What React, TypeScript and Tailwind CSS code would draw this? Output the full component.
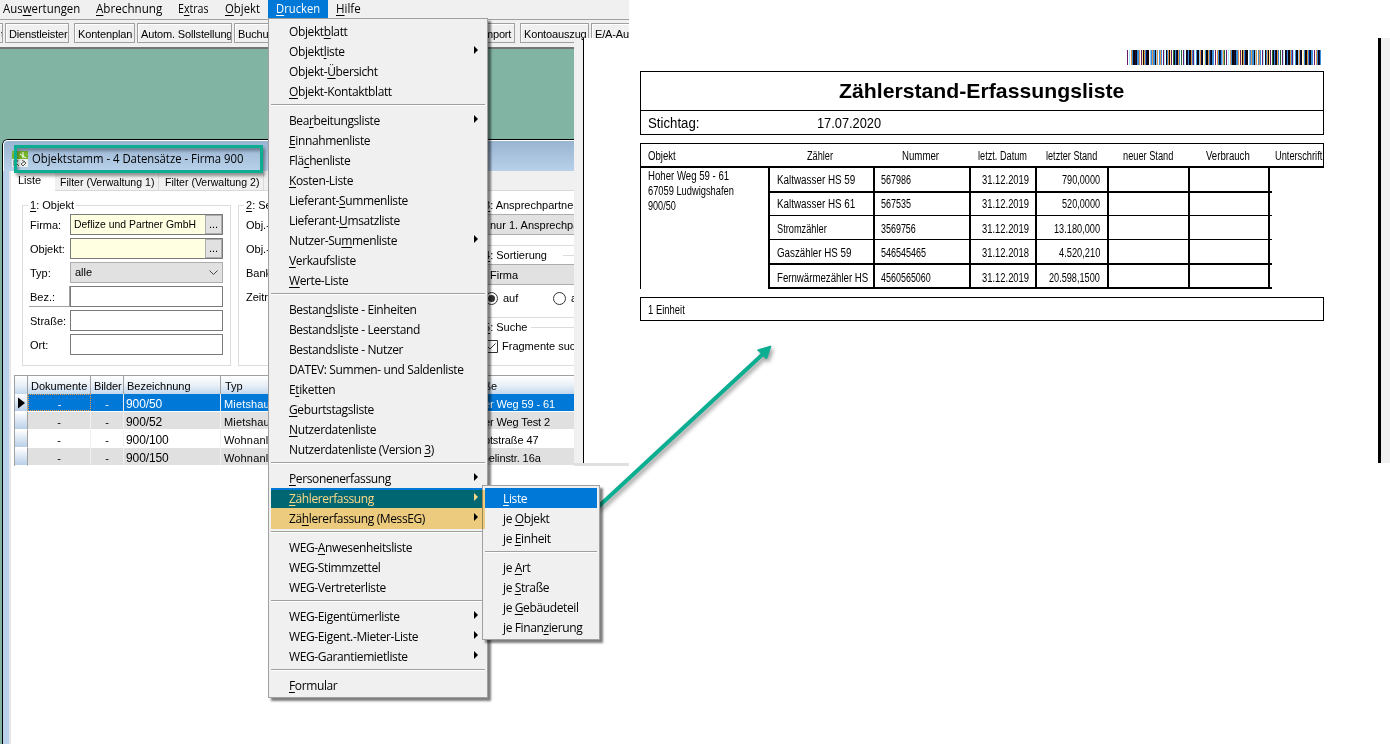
import React, { useLayoutEffect, useRef, useState } from 'react';
import clsx from 'clsx';

const SEGOE = "font-['Open_Sans',sans-serif]";
const MSSANS = "font-['Liberation_Sans',sans-serif]";

type MenuEntry = { label: string; sub?: boolean; active?: boolean };

// "&" marks the mnemonic letter
const menuGroups: MenuEntry[][] = [
  [
    { label: 'Objekt&blatt' },
    { label: 'Objekt&liste', sub: true },
    { label: 'Objekt-&Übersicht' },
    { label: '&Objekt-Kontaktblatt' },
  ],
  [
    { label: 'Bea&rbeitungsliste', sub: true },
    { label: '&Einnahmenliste' },
    { label: 'Flä&chenliste' },
    { label: '&Kosten-Liste' },
    { label: 'Lieferant-&Summenliste' },
    { label: 'Lieferant-&Umsatzliste' },
    { label: 'Nutzer-Su&mmenliste', sub: true },
    { label: '&Verkaufsliste' },
    { label: '&Werte-Liste' },
  ],
  [
    { label: 'Bestan&dsliste - Einheiten' },
    { label: 'Bestandsl&iste - Leerstand' },
    { label: 'Bestandsliste - Nutzer' },
    { label: 'DATEV: Summen- und Saldenliste' },
    { label: 'E&tiketten' },
    { label: '&Geburtstagsliste' },
    { label: '&Nutzerdatenliste' },
    { label: 'Nutzerdatenliste (Version &3)' },
  ],
  [
    { label: '&Personenerfassung', sub: true },
    { label: '&Zählererfassung', sub: true, active: true },
    { label: 'Zä&hlererfassung (MessEG)', sub: true },
  ],
  [{ label: 'WEG-&Anwesenheitsliste' }, { label: 'WEG-Stimmzettel' }, { label: 'WEG-Vertreterliste' }],
  [
    { label: 'WEG-Eigentümerliste', sub: true },
    { label: 'WEG-Eigent.-Mieter-Liste', sub: true },
    { label: 'WEG-Garantiemietliste', sub: true },
  ],
  [{ label: '&Formular' }],
];

const subGroups: MenuEntry[][] = [
  [{ label: '&Liste', active: true }, { label: 'je &Objekt' }, { label: 'je &Einheit' }],
  [{ label: 'je &Art' }, { label: 'je &Straße' }, { label: 'je &Gebäudeteil' }, { label: 'je Finan&zierung' }],
];

const gridRows = [
  { name: '900/50', type: 'Mietshaus', street: 'Hoher Weg 59 - 61' },
  { name: '900/52', type: 'Mietshaus', street: 'Hoher Weg Test 2' },
  { name: '900/100', type: 'Wohnanlage', street: 'Hauptstraße 47' },
  { name: '900/150', type: 'Wohnanlage', street: 'Zeppelinstr. 16a' },
];

const meters = [
  { name: 'Kaltwasser HS 59', nw: 78, no: '567986', ow: 30, date: '31.12.2019', value: '790,0000', vw: 38, row: 'h-[25px] border-b-2 leading-[25px]' },
  { name: 'Kaltwasser HS 61', nw: 78, no: '567535', ow: 30, date: '31.12.2019', value: '520,0000', vw: 38, row: 'h-[23px] border-b leading-[23px]' },
  { name: 'Stromzähler', nw: 50, no: '3569756', ow: 35, date: '31.12.2019', value: '13.180,000', vw: 46, row: 'h-[24px] border-b leading-[27px]' },
  { name: 'Gaszähler HS 59', nw: 74, no: '546545465', ow: 45, date: '31.12.2018', value: '4.520,210', vw: 41, row: 'h-[25px] border-b-2 leading-[27px]' },
  { name: 'Fernwärmezähler HS', nw: 91, no: '4560565060', ow: 50, date: '31.12.2019', value: '20.598,1500', vw: 51, row: 'h-[24px] border-b-2 leading-[27px]' },
];

const BARS = 'p.c.obkknkbbo.pykobnkk.sbobbkso.bob.pc.kbokyp.gkbnkob.g.pc.knbkkobpc.bkksonk.ybkkobnkbb.p.obknbsog.';
const barColors: Record<string, string> = {
  k: '#100808', n: '#10104a', b: '#3a8fdc', o: '#e0954a', p: '#6a1a6a', c: '#a8e8ff', g: '#1c6a38', y: '#ffeaa0', s: '#8ccbfa',
};

// Squeezes its text to exactly w pixels, like the printer font metrics do
const Fit: React.FC<{ w: number; children: React.ReactNode }> = ({ w, children }) => {
  const ref = useRef<HTMLSpanElement>(null);
  const [scale, setScale] = useState(1);
  useLayoutEffect(() => {
    if (ref.current) setScale(w / ref.current.offsetWidth);
  }, [w]);
  return (
    <span className="inline-block whitespace-nowrap" style={{ width: w }}>
      <span ref={ref} className="inline-block origin-left" style={{ transform: `scaleX(${scale})` }}>
        {children}
      </span>
    </span>
  );
};

const Mnemonic: React.FC<{ text: string }> = ({ text }) => {
  const i = text.indexOf('&');
  if (i < 0) return <>{text}</>;
  return (
    <>
      {text.slice(0, i)}
      <span className="underline underline-offset-2 decoration-1">{text[i + 1]}</span>
      {text.slice(i + 2)}
    </>
  );
};

const Menu: React.FC<{ groups: MenuEntry[][]; className?: string }> = ({ groups, className }) => (
  <div className={clsx('absolute z-20 border border-[#a0a0a0] bg-[#f0f0f0] px-[2px] pt-[2px] text-[12px] tracking-[-0.38px] shadow-[3px_3px_2px_rgba(0,0,0,0.5)]', className)}>
    {groups.map((group, gi) => (
      <React.Fragment key={gi}>
        {gi > 0 && (
          <div className="flex h-[9px] flex-col pt-[3px]">
            <div className="h-px bg-[#a0a0a0]" />
            <div className="h-px bg-white" />
          </div>
        )}
        {group.map((e) => (
          <div
            key={e.label}
            className={clsx('flex h-5 items-center justify-between pl-[18px] pr-[7px] whitespace-pre', e.active && 'bg-[#0078d7] text-white')}
          >
            <span className="pt-[2px] leading-5"><Mnemonic text={e.label} /></span>
            {e.sub && (
              <svg width="4" height="8" viewBox="0 0 4 8" className="mb-[3px]" fill="currentColor">
                <path d="M0 0 L4 4 L0 8 Z" />
              </svg>
            )}
          </div>
        ))}
      </React.Fragment>
    ))}
  </div>
);

const ToolButton: React.FC<{ label: string; className: string }> = ({ label, className }) => (
  <div className={clsx('h-5 shrink-0 overflow-hidden border border-[#a0a0a0] pl-[3px] leading-[20px] tracking-[-0.15px] whitespace-nowrap shadow-[inset_1px_1px_0_#fff]', className)}>
    {label}
  </div>
);

const Field: React.FC<{ label: string; children: React.ReactNode; line?: boolean }> = ({ label, children, line }) => (
  <div className="mb-[3px] flex h-[21px]">
    <div className={clsx('ml-[6px] w-[41px] shrink-0 pl-px leading-[22px]', line && 'border-r border-b border-[#a0a0a0]')}>{label}</div>
    {children}
  </div>
);

const Dots = () => (
  <div className="h-[19px] w-[17px] border border-[#adadad] bg-[#e1e1e1] text-center leading-[17px]">...</div>
);

const input = 'flex h-[21px] w-[153px] items-center border border-[#7a7a7a] bg-white';

const Legend: React.FC<{ text: string; className?: string }> = ({ text, className }) => (
  <legend className={clsx('h-3 leading-3 whitespace-nowrap', className)}><Mnemonic text={text} /></legend>
);

const FilterForm = () => (
  <div className="flex h-[175px] pl-[11px] pt-[8px]">
    <fieldset className="h-[167px] w-[209px] shrink-0 border border-[#dcdcdc]">
      <Legend text="&1: Objekt" className="ml-[5px] px-[2px]" />
      <div className="pt-[3px]">
        <Field label="Firma:">
          <div className={clsx(input, 'justify-between')}>
            <span className="h-[19px] flex-1 bg-[#ffffe1] pl-[3px] leading-[18px]"><Fit w={122}>Deflize und Partner GmbH</Fit></span>
            <Dots />
          </div>
        </Field>
        <Field label="Objekt:">
          <div className={clsx(input, 'justify-between')}>
            <span className="h-[19px] flex-1 bg-[#ffffe1]" />
            <Dots />
          </div>
        </Field>
        <Field label="Typ:">
          <div className="flex h-[21px] w-[153px] items-center justify-between border border-[#adadad] bg-[#e1e1e1] pl-1 pr-1">
            alle
            <svg width="9" height="6" viewBox="0 0 9 6" fill="none" stroke="#444"><path d="M0.5 0.5 L4.5 4.5 L8.5 0.5" /></svg>
          </div>
        </Field>
        <Field label="Bez.:" line><div className={input} /></Field>
        <Field label="Straße:"><div className={input} /></Field>
        <Field label="Ort:"><div className={input} /></Field>
      </div>
    </fieldset>
    <fieldset className="ml-[7px] h-[167px] w-[222px] shrink-0 border border-[#dcdcdc]">
      <Legend text="&2: Selektion" className="ml-[5px] px-[2px]" />
      <div className="pl-[7px] pt-[2px] leading-6">
        <p>Obj.-Art:</p>
        <p>Obj.-Nr.:</p>
        <p>Bank:</p>
        <p>Zeitraum:</p>
      </div>
    </fieldset>
    <div className="ml-[19px] flex w-[120px] shrink-0 flex-col">
      <fieldset className="h-[47px] border border-r-0 border-[#dcdcdc]">
        <Legend text="&3: Ansprechpartner" className="ml-[4px] pr-1" />
        <div className="mt-[3px] h-[21px] border-y border-[#adadad] bg-[#e1e1e1] pl-[10px] leading-[20px] whitespace-nowrap">nur 1. Ansprechpartner</div>
      </fieldset>
      <fieldset className="mt-[3px] h-[69px] border border-r-0 border-[#dcdcdc]">
        <Legend text="&4: Sortierung" className="ml-[4px] pr-4" />
        <div className="mt-[3px] h-[21px] border-y border-[#adadad] bg-[#e1e1e1] pl-[10px] leading-[20px]">Firma</div>
        <div className="mt-[7px] flex h-[13px] items-center gap-[5px] pl-[5px]">
          <span className="flex size-[13px] items-center justify-center rounded-full border border-[#333]"><span className="size-[7px] rounded-full bg-[#333]" /></span>
          <span className="w-[45px]">auf</span>
          <span className="size-[13px] rounded-full border border-[#333]" />
          <span>ab</span>
        </div>
      </fieldset>
      <fieldset className="mt-[3px] h-[45px] border border-r-0 border-[#dcdcdc]">
        <Legend text="&5: Suche" className="ml-[4px] pr-1" />
        <div className="mt-[7px] flex h-[13px] items-center gap-[4px] pl-[5px] whitespace-nowrap">
          <svg width="13" height="13" viewBox="0 0 13 13" fill="none" stroke="#333" className="shrink-0"><path d="M0.5 0.5h12v12h-12z M2.5 6.5 L5 9 L10.5 3.5" /></svg>
          Fragmente suchen
        </div>
      </fieldset>
    </div>
  </div>
);

const ObjectGrid = () => (
  <div className="ml-[3px] mt-[9px] w-[580px] border-l border-t border-[#a0a0a0]">
    <div className="flex h-[18px] bg-gradient-to-b from-white via-[#e9f0f8] to-[#c3d8ee] leading-[21px]">
      <span className="w-[13px] border-r border-[#a0a0a0]" />
      <span className="w-[63px] border-r border-[#a0a0a0] pl-[3px]">Dokumente</span>
      <span className="w-[33px] border-r border-[#a0a0a0] pl-[3px] tracking-[-0.1px]">Bilder</span>
      <span className="w-[97px] border-r border-[#a0a0a0] pl-[3px]">Bezeichnung</span>
      <span className="w-[243px] pl-[4px]">Typ</span>
      <span>Straße</span>
    </div>
    {gridRows.map((r, i) => (
      <div key={r.name} className="flex h-[18px] leading-[20px]">
        <span className="flex w-[13px] items-center border-b border-r border-b-white border-r-[#a0a0a0] bg-gradient-to-b from-white to-[#b9cfe8]">
          {i === 0 && <svg width="7" height="12" viewBox="0 0 7 12" className="ml-[3px]"><path d="M0 0.5 L7 6 L0 11.5 Z" /></svg>}
        </span>
        <div className={clsx('flex flex-1 border-b border-white', i === 0 ? 'bg-[#0078d7] text-white' : i % 2 ? 'bg-[#e0e0e0]' : 'bg-white')}>
          <span className={clsx('w-[63px] border-r text-center', i === 0 ? 'border border-dotted border-[#ff9a3c] leading-[18px]' : 'border-[#f0f0f0]')}>-</span>
          <span className="w-[33px] border-r border-[#f0f0f0] text-center">-</span>
          <span className="w-[97px] border-r border-[#f0f0f0] pl-[2px] text-[12px] tracking-[-0.1px]">{r.name}</span>
          <span className="w-[243px] pl-[3px] tracking-[0.15px]">{r.type}</span>
          <span className="tracking-[-0.1px]">{r.street}</span>
        </div>
      </div>
    ))}
  </div>
);

const Desktop = () => (
  <div className="flex h-[695px] w-[574px] flex-col overflow-hidden bg-[#82b4a4] pl-[2px] pt-[90px]">
    <div className="flex flex-1 flex-col rounded-tl-[6px] border-l border-t border-black bg-[#b9d1ea]">
      <div className="flex h-[31px] items-center rounded-tl-[5px] border-l border-t border-white bg-gradient-to-b from-[#99b4d1] to-[#b9d1ea] pl-[8px]">
        <svg width="16" height="16" viewBox="0 0 16 16" className="mt-[5px]">
          <path d="M0 0h16v8H0z" fill="#77b52c" />
          <path d="M0 8h16v8H0z" fill="#eef0ee" />
          <path d="M2 1l3 5M11 1v6M8 3l6 4" stroke="#fff" fill="none" />
          <path d="M2 9v6M6 9l-2 3 3 3M10 9l4 3-3 3-2-2 4-3" stroke="#555" fill="none" />
        </svg>
        <span className={clsx(SEGOE, 'ml-[4px] mt-[5px] text-[12px] leading-4')}><Fit w={211}>Objektstamm - 4 Datensätze - Firma 900</Fit></span>
      </div>
      <div className="ml-[6px] flex-1 border-l-2 border-[#e4e6ea] bg-white">
        <div className="flex h-[20px] bg-[#f0f0f0] leading-[20px]">
          <span className="w-[44px] bg-white pl-[7px] leading-[19px]">Liste</span>
          <span className="mt-px w-[104px] border-b border-r border-[#d9d9d9] pl-[5px] leading-[21px] whitespace-nowrap"><Fit w={94}>Filter (Verwaltung 1)</Fit></span>
          <span className="mt-px w-[105px] border-b border-r border-[#d9d9d9] pl-[6px] leading-[21px] whitespace-nowrap"><Fit w={94}>Filter (Verwaltung 2)</Fit></span>
          <span className="flex-1 border-b border-[#d9d9d9]" />
        </div>
        <FilterForm />
        <ObjectGrid />
      </div>
    </div>
  </div>
);

const Report = () => (
  <div className="relative z-10 mt-[38px] flex h-[425px] flex-1 border-l border-black bg-white">
    <div className={clsx(MSSANS, 'w-[740px] pl-[56px] text-[12px] text-black')}>
      <div className="mt-3 ml-[487px] flex h-[15px] w-[195px]">
        {[...(BARS + BARS)].slice(0, 194).map((c, i) => (
          <span key={i} className="w-px" style={{ background: barColors[c] }} />
        ))}
      </div>
      <div className="mt-[6px] w-[684px] border border-black">
        <div className="h-[39px] border-b border-black pl-[198px] text-[21px] leading-[38px] font-bold"><Fit w={285}>Zählerstand-Erfassungsliste</Fit></div>
        <div className="flex h-[23px] pl-[7px] text-[14px] leading-[24px]">
          <span className="w-[169px]"><Fit w={51}>Stichtag:</Fit></span>
          <Fit w={64}>17.07.2020</Fit>
        </div>
      </div>
      <div className="mt-2 flex h-[25px] w-[684px] border border-b-2 border-black pl-[7px] leading-[24px]">
        <span className="w-[159px]"><Fit w={28}>Objekt</Fit></span>
        <span className="w-[95px]"><Fit w={26}>Zähler</Fit></span>
        <span className="w-[76px]"><Fit w={37}>Nummer</Fit></span>
        <span className="w-[68px]"><Fit w={49}>letzt. Datum</Fit></span>
        <span className="w-[77px]"><Fit w={51}>letzter Stand</Fit></span>
        <span className="w-[83px]"><Fit w={50}>neuer Stand</Fit></span>
        <span className="w-[69px]"><Fit w={44}>Verbrauch</Fit></span>
        <Fit w={47}>Unterschrift</Fit>
      </div>
      <div className="flex h-[121px] border-l border-black">
        <div className="w-[127px] pl-[7px] pt-px leading-[15px]">
          <p><Fit w={81}>Hoher Weg 59 - 61</Fit></p>
          <p><Fit w={86}>67059 Ludwigshafen</Fit></p>
          <p><Fit w={28}>900/50</Fit></p>
        </div>
        <div className="w-[504px] border-l-2 border-black">
          {meters.map((m) => (
            <div key={m.name} className={clsx('flex border-black', m.row)}>
              <div className="w-[105px] border-r-2 border-black pl-[7px]"><Fit w={m.nw}>{m.name}</Fit></div>
              <div className="w-[96px] border-r-2 border-black pl-[6px]"><Fit w={m.ow}>{m.no}</Fit></div>
              <div className="w-[66px] border-r-2 border-black pl-[11px]"><Fit w={47}>{m.date}</Fit></div>
              <div className="w-[72px] border-r-2 border-black pr-[7px] text-right"><Fit w={m.vw}>{m.value}</Fit></div>
              <div className="w-[81px] border-r-2 border-black" />
              <div className="w-[80px] border-r-2 border-black" />
            </div>
          ))}
        </div>
      </div>
      <div className="mt-2 h-[24px] w-[684px] border border-black pl-[7px] leading-[24px]"><Fit w={37}>1 Einheit</Fit></div>
    </div>
    <div className="ml-[54px] w-[3px] bg-black" />
    <div className="flex-1 bg-[#f0f0f0]" />
  </div>
);

const App: React.FC = () => (
  <div className={clsx(MSSANS, 'relative flex h-[744px] w-[1390px] overflow-hidden bg-white text-[11px] text-black')}>
    <div className="w-[583px] shrink-0">
      {/* Menu bar */}
      <div className={clsx(SEGOE, 'flex h-5 w-[629px] border-b border-[#a0a0a0] bg-[#f0f0f0] text-[12px] leading-[18px] whitespace-nowrap')}>
        <span className="w-[93px] pl-[3px]"><Fit w={77}><Mnemonic text="Aus&wertungen" /></Fit></span>
        <span className="w-[82px] pl-[3px]"><Fit w={66}><Mnemonic text="&Abrechnung" /></Fit></span>
        <span className="w-[47px] pl-[3px]"><Fit w={31}><Mnemonic text="E&xtras" /></Fit></span>
        <span className="w-[46px] pl-[3px]"><Fit w={35}><Mnemonic text="&Objekt" /></Fit></span>
        <span className="h-[18px] w-[60px] bg-[#0078d7] pl-2 text-white"><Fit w={44}><Mnemonic text="&Drucken" /></Fit></span>
        <span className="pl-2"><Fit w={25}><Mnemonic text="&Hilfe" /></Fit></span>
      </div>
      {/* Toolbar */}
      <div className="flex h-[29px] w-[629px] overflow-hidden border-b-2 border-[#757575] bg-[#f0f0f0] pt-[3px]">
        <ToolButton label="t" className="-ml-[3px] w-[6px]" />
        <ToolButton label="Dienstleister" className="ml-[2px] w-[64px]" />
        <ToolButton label="Kontenplan" className="ml-[5px] w-[61px]" />
        <ToolButton label="Autom. Sollstellung" className="ml-[2px] w-[95px]" />
        <ToolButton label="Buchungen" className="ml-[2px] w-[70px]" />
        <ToolButton label="Import" className="ml-[173px] w-[38px]" />
        <ToolButton label="Kontoauszug" className="ml-[5px] w-[69px]" />
        <ToolButton label="E/A-Auswertung" className="ml-[2px] w-[80px] border-r-0" />
      </div>
      <div className="flex w-[583px]">
        <Desktop />
        <div className="-mt-[7px] h-[421px] w-[9px] bg-[#f0f0f0]" />
      </div>
    </div>

    <Report />

    {/* Lower edge of the main window */}
    <div className="absolute top-[463px] left-[574px] h-[3px] w-[55px] bg-[#e0e0e0]" />

    {/* Frame around the window title */}
    <div className="absolute top-[145px] left-[14px] h-[28px] w-[249px] border-3 border-[#0cae91] shadow-[2px_3px_3px_rgba(0,0,0,0.4),inset_2px_3px_3px_rgba(0,0,0,0.3)]" />

    {/* Arrow from the submenu to the report */}
    <svg width="190" height="175" viewBox="0 0 190 175" className="absolute top-[340px] left-[594px] z-20 drop-shadow-[2px_3px_2px_rgba(0,0,0,0.4)]">
      <path d="M4 167 L169 14" stroke="#0cae91" strokeWidth="4" />
      <path d="M177 6 L172.5 19 L163.5 10 Z" fill="#0cae91" stroke="#0cae91" />
    </svg>

    <Menu groups={menuGroups} className={clsx(SEGOE, 'top-[18px] left-[268px] h-[680px] w-[220px]')} />
    <Menu groups={subGroups} className={clsx(SEGOE, 'top-[485px] left-[482px] h-[155px] w-[118px]')} />

    {/* Text marker over the two meter entries */}
    <div className="absolute top-[490px] left-[271px] z-20 h-[39px] w-[214px] bg-[#fbd887] mix-blend-multiply" />
  </div>
);

export default App;
